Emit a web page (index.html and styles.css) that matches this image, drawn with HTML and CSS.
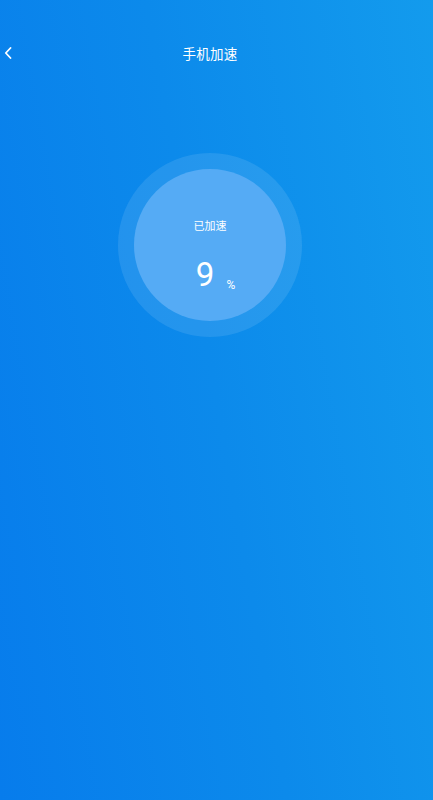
FILE: index.html
```html
<!DOCTYPE html>
<html lang="zh">
<head>
<meta charset="utf-8">
<title>手机加速</title>
<link rel="stylesheet" href="styles.css">
</head>
<body>
<div class="page">
  <header class="topbar">
    <span class="back" aria-label="返回">
      <svg width="8" height="12" viewBox="0 0 8 12"><path d="M6.5 1 L1.8 6 L6.5 11" fill="none" stroke="#fff" stroke-width="1.8" stroke-linecap="round" stroke-linejoin="round"/></svg>
    </span>
    <h1 class="title">手机加速</h1>
  </header>
  <main class="content">
    <div class="ring">
      <div class="disc">
        <div class="label">已加速</div>
        <div class="value"><span class="num">9</span><span class="pct">%</span></div>
      </div>
    </div>
  </main>
</div>
</body>
</html>
```
FILE: styles.css
```css
html, body {
  margin: 0;
  padding: 0;
  height: 100%;
}
body {
  background: linear-gradient(80deg, #077cec 0%, #0c8aeb 50%, #139bed 100%);
  font-family: "Noto Sans CJK SC", "Noto Sans", sans-serif;
  color: #fff;
  overflow: hidden;
}
.page {
  height: 800px;
  padding-right: 13px;
  box-sizing: border-box;
}
.topbar {
  margin-top: 31px;
  height: 44px;
  display: flex;
  align-items: center;
  justify-content: center;
  position: relative;
}
.back {
  position: absolute;
  left: 4px;
  top: 16px;
  width: 8px;
  height: 12px;
  display: flex;
}
.title {
  margin: 0;
  font-size: 13.5px;
  font-weight: 400;
  line-height: 20px;
  letter-spacing: 0.2px;
}
.content {
  display: flex;
  justify-content: center;
  margin-top: 78px;
}
.ring {
  width: 184px;
  height: 184px;
  border-radius: 50%;
  background: rgba(255, 255, 255, 0.1);
  display: flex;
  align-items: center;
  justify-content: center;
}
.disc {
  width: 152px;
  height: 152px;
  border-radius: 50%;
  background: #55abf5;
  display: flex;
  flex-direction: column;
  align-items: center;
  box-sizing: border-box;
  padding-top: 49px;
}
.label {
  font-size: 11px;
  line-height: 14px;
}
.value {
  margin-top: 26px;
  display: flex;
  align-items: baseline;
  padding-left: 11px;
}
.num {
  font-family: Roboto, sans-serif;
  font-weight: 400;
  font-size: 33px;
  line-height: 33px;
}
.pct {
  font-family: Roboto, sans-serif;
  font-size: 12px;
  margin-left: 12px;
  position: relative;
  top: 3px;
}
```
